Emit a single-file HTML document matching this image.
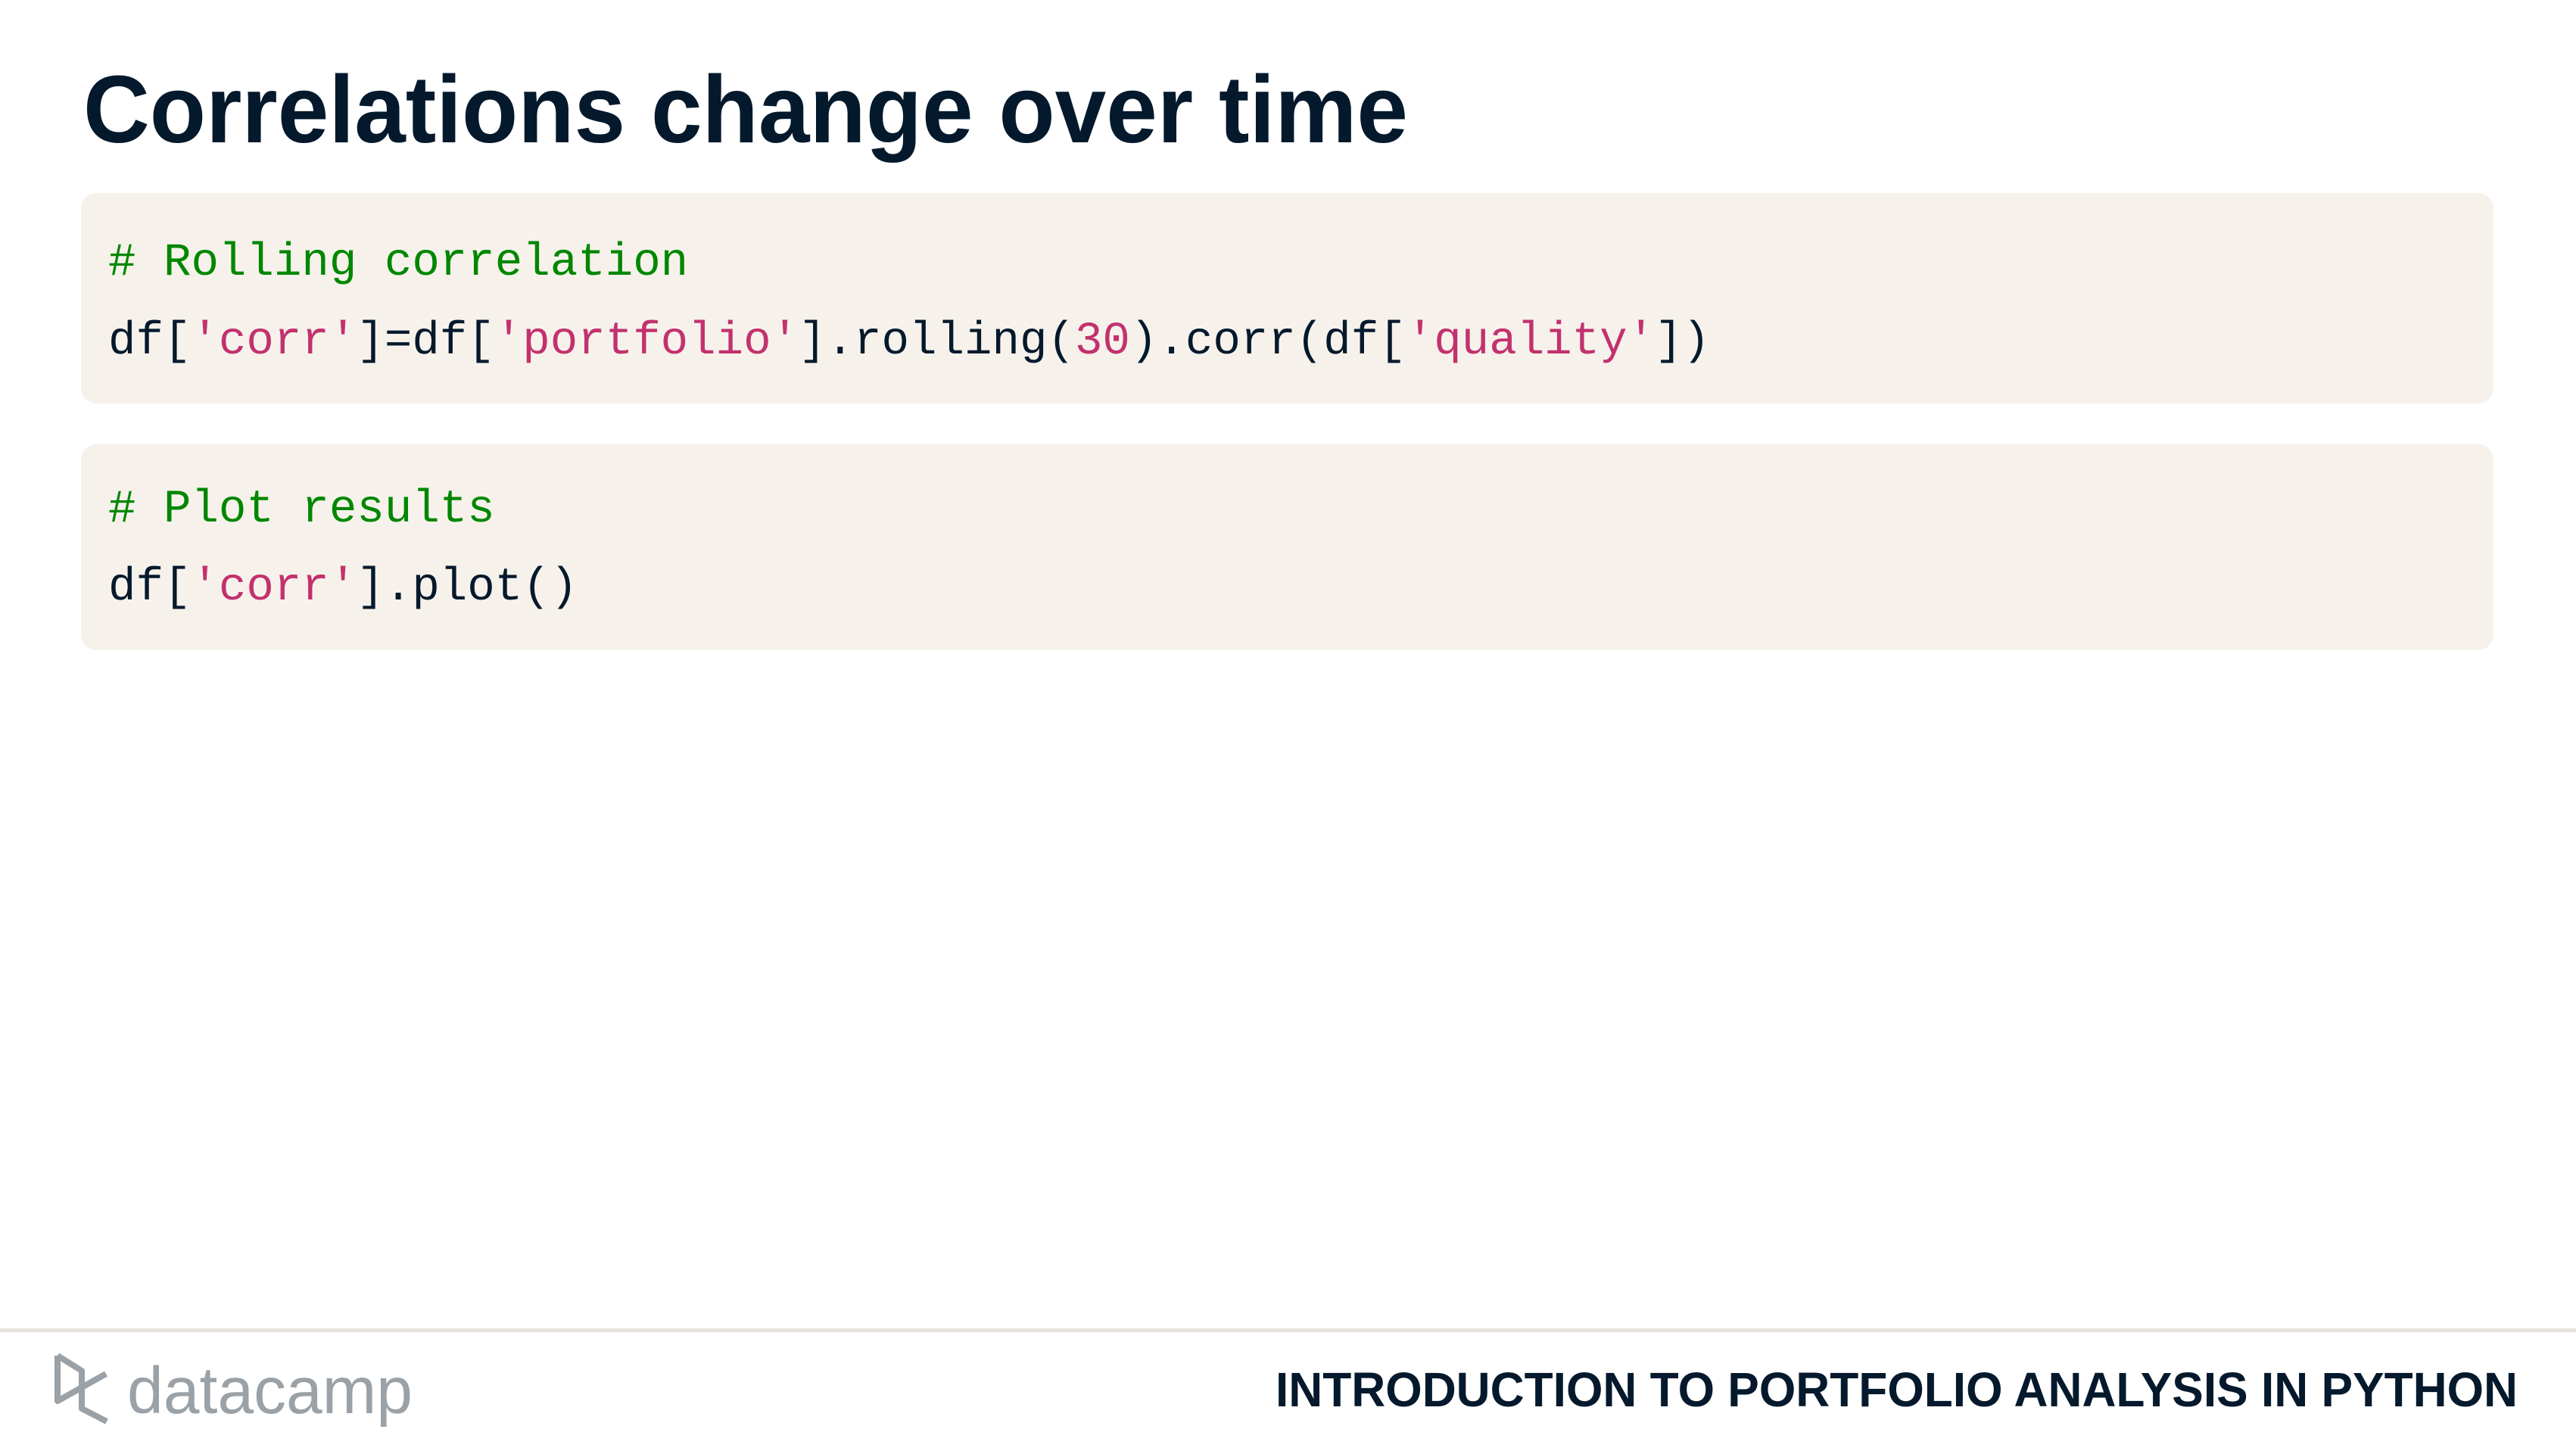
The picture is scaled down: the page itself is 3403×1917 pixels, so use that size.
<!DOCTYPE html>
<html><head><meta charset="utf-8"><style>
html,body{margin:0;padding:0;background:#fff;}
svg{display:block;}
</style></head><body>
<svg width="3403" height="1917" viewBox="0 0 3403 1917" xmlns="http://www.w3.org/2000/svg">
<rect width="3403" height="1917" fill="#ffffff"/>
<text x="110" y="188" font-family="Liberation Sans, sans-serif" font-weight="bold" font-size="126" fill="#05192d" textLength="1750" lengthAdjust="spacingAndGlyphs">Correlations change over time</text>
<rect x="107" y="255" width="3187" height="278" rx="20" fill="#f6f2eb"/>
<rect x="107" y="587" width="3187" height="272" rx="20" fill="#f6f2eb"/>
<g font-family="Liberation Mono, monospace" font-size="60.8" xml:space="preserve">
<text x="143" y="363" fill="#008700"># Rolling correlation</text>
<text x="143" y="467" fill="#05192d">df[<tspan fill="#c3316e">'corr'</tspan>]=df[<tspan fill="#c3316e">'portfolio'</tspan>].rolling(<tspan fill="#c3316e">30</tspan>).corr(df[<tspan fill="#c3316e">'quality'</tspan>])</text>
<text x="143" y="689" fill="#008700"># Plot results</text>
<text x="143" y="792" fill="#05192d">df[<tspan fill="#c3316e">'corr'</tspan>].plot()</text>
</g>
<rect x="0" y="1755" width="3403" height="5" fill="#e6e2db"/>
<g fill="none" stroke="#9aa1a7" stroke-width="8" stroke-linejoin="round">
<path d="M76 1791 L76 1851 L140 1815"/>
<path d="M76 1791 L108 1811 L108 1861 L141 1878"/>
</g>
<text x="168" y="1867" font-family="Liberation Sans, sans-serif" font-size="87" fill="#9aa1a7" textLength="377" lengthAdjust="spacingAndGlyphs">datacamp</text>
<text x="1685" y="1858" font-family="Liberation Sans, sans-serif" font-weight="bold" font-size="64" fill="#05192d" textLength="1641" lengthAdjust="spacingAndGlyphs">INTRODUCTION TO PORTFOLIO ANALYSIS IN PYTHON</text>
</svg>
</body></html>
